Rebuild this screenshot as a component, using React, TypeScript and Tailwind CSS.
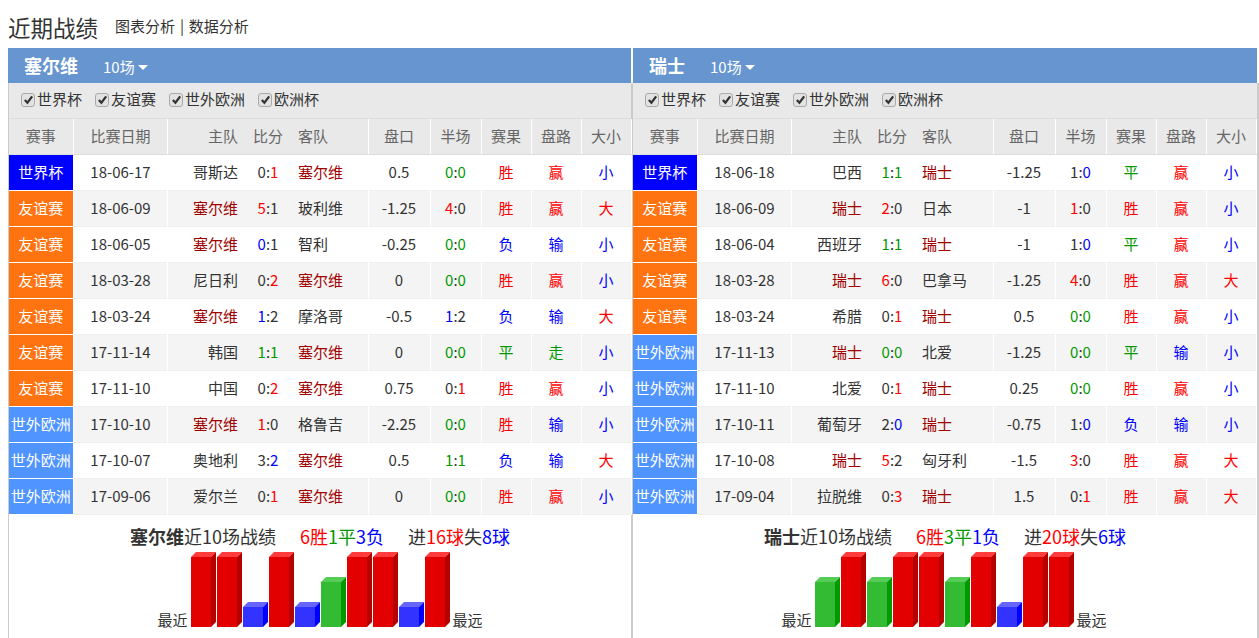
const SANS = "font-['Noto_Sans_CJK_SC','Liberation_Sans',sans-serif]";

type Match = {
  cup: string;
  date: string;
  home: string;
  score: string;
  away: string;
  pan: string;
  half: string;
  res: string;
  road: string;
  size: string;
};

const CUP_BG: Record<string, string> = {
  世界杯: 'bg-[#0000ff]',
  友谊赛: 'bg-[#ff7310]',
  世外欧洲: 'bg-[#4f94ff]',
};

const TONE: Record<string, string> = {
  r: 'text-[#ff0000]',
  b: 'text-[#0000ff]',
  g: 'text-[#009900]',
};

const WORD_TONE: Record<string, string> = {
  胜: 'r', 赢: 'r', 大: 'r',
  负: 'b', 输: 'b', 小: 'b',
  平: 'g', 走: 'g',
};

// score strings are "a:b|xy" where x and y are the tone of each number, - is none
const serbia: Match[] = [
  { cup: '世界杯', date: '18-06-17', home: '哥斯达', score: '0:1|-r', away: '塞尔维', pan: '0.5', half: '0:0|gg', res: '胜', road: '赢', size: '小' },
  { cup: '友谊赛', date: '18-06-09', home: '塞尔维', score: '5:1|r-', away: '玻利维', pan: '-1.25', half: '4:0|r-', res: '胜', road: '赢', size: '大' },
  { cup: '友谊赛', date: '18-06-05', home: '塞尔维', score: '0:1|b-', away: '智利', pan: '-0.25', half: '0:0|gg', res: '负', road: '输', size: '小' },
  { cup: '友谊赛', date: '18-03-28', home: '尼日利', score: '0:2|-r', away: '塞尔维', pan: '0', half: '0:0|gg', res: '胜', road: '赢', size: '小' },
  { cup: '友谊赛', date: '18-03-24', home: '塞尔维', score: '1:2|b-', away: '摩洛哥', pan: '-0.5', half: '1:2|b-', res: '负', road: '输', size: '大' },
  { cup: '友谊赛', date: '17-11-14', home: '韩国', score: '1:1|gg', away: '塞尔维', pan: '0', half: '0:0|gg', res: '平', road: '走', size: '小' },
  { cup: '友谊赛', date: '17-11-10', home: '中国', score: '0:2|-r', away: '塞尔维', pan: '0.75', half: '0:1|-r', res: '胜', road: '赢', size: '小' },
  { cup: '世外欧洲', date: '17-10-10', home: '塞尔维', score: '1:0|r-', away: '格鲁吉', pan: '-2.25', half: '0:0|gg', res: '胜', road: '输', size: '小' },
  { cup: '世外欧洲', date: '17-10-07', home: '奥地利', score: '3:2|-b', away: '塞尔维', pan: '0.5', half: '1:1|gg', res: '负', road: '输', size: '大' },
  { cup: '世外欧洲', date: '17-09-06', home: '爱尔兰', score: '0:1|-r', away: '塞尔维', pan: '0', half: '0:0|gg', res: '胜', road: '赢', size: '小' },
];

const swiss: Match[] = [
  { cup: '世界杯', date: '18-06-18', home: '巴西', score: '1:1|gg', away: '瑞士', pan: '-1.25', half: '1:0|-b', res: '平', road: '赢', size: '小' },
  { cup: '友谊赛', date: '18-06-09', home: '瑞士', score: '2:0|r-', away: '日本', pan: '-1', half: '1:0|r-', res: '胜', road: '赢', size: '小' },
  { cup: '友谊赛', date: '18-06-04', home: '西班牙', score: '1:1|gg', away: '瑞士', pan: '-1', half: '1:0|-b', res: '平', road: '赢', size: '小' },
  { cup: '友谊赛', date: '18-03-28', home: '瑞士', score: '6:0|r-', away: '巴拿马', pan: '-1.25', half: '4:0|r-', res: '胜', road: '赢', size: '大' },
  { cup: '友谊赛', date: '18-03-24', home: '希腊', score: '0:1|-r', away: '瑞士', pan: '0.5', half: '0:0|gg', res: '胜', road: '赢', size: '小' },
  { cup: '世外欧洲', date: '17-11-13', home: '瑞士', score: '0:0|gg', away: '北爱', pan: '-1.25', half: '0:0|gg', res: '平', road: '输', size: '小' },
  { cup: '世外欧洲', date: '17-11-10', home: '北爱', score: '0:1|-r', away: '瑞士', pan: '0.25', half: '0:0|gg', res: '胜', road: '赢', size: '小' },
  { cup: '世外欧洲', date: '17-10-11', home: '葡萄牙', score: '2:0|-b', away: '瑞士', pan: '-0.75', half: '1:0|-b', res: '负', road: '输', size: '小' },
  { cup: '世外欧洲', date: '17-10-08', home: '瑞士', score: '5:2|r-', away: '匈牙利', pan: '-1.5', half: '3:0|r-', res: '胜', road: '赢', size: '大' },
  { cup: '世外欧洲', date: '17-09-04', home: '拉脱维', score: '0:3|-r', away: '瑞士', pan: '1.5', half: '0:1|-r', res: '胜', road: '赢', size: '大' },
];

function Score({ value }: { value: string }) {
  const [nums, tones] = value.split('|');
  const [a, b] = nums.split(':');
  return (
    <>
      <span className={TONE[tones[0]]}>{a}</span>:<span className={TONE[tones[1]]}>{b}</span>
    </>
  );
}

function FilterBox({ label }: { label: string }) {
  return (
    <label className="flex items-center gap-[2px]">
      <span className="flex h-[14px] w-[14px] items-center justify-center rounded-[3px] border border-[#aaaaaa] bg-[#e2e2e2]">
        <svg viewBox="0 0 12 12" className="h-[11px] w-[11px]">
          <polyline points="2,6.5 4.8,9.5 10,2.5" fill="none" stroke="#333333" strokeWidth="2.4" />
        </svg>
      </span>
      <span>{label}</span>
    </label>
  );
}

const BAR_COLORS = {
  r: { front: '#e30000', top: '#ff3b3b', side: '#b50000' },
  g: { front: '#33bb33', top: '#55cc55', side: '#009900' },
  b: { front: '#3333ff', top: '#6666ff', side: '#0000ff' },
};

const BAR_HEIGHT = { r: 75, g: 50, b: 25 };

function Bar({ kind }: { kind: 'r' | 'g' | 'b' }) {
  const c = BAR_COLORS[kind];
  const h = BAR_HEIGHT[kind];
  return (
    <svg width="25" height={h} className="block">
      <rect x="0" y="5" width="20" height={h - 5} fill={c.front} />
      <polygon points="0,5 5,0 25,0 20,5" fill={c.top} />
      <polygon points={`20,5 25,0 25,${h - 5} 20,${h}`} fill={c.side} />
    </svg>
  );
}

function Panel({
  team,
  rows,
  right,
  bars,
  record,
  goals,
}: {
  team: string;
  rows: Match[];
  right?: boolean;
  bars: ('r' | 'g' | 'b')[];
  record: [string, string, string];
  goals: [string, string];
}) {
  const head = 'h-[35px] border-b border-[#dddddd] bg-[#e9e9e9] text-center font-normal text-[#666666]';
  return (
    <section className={right ? 'w-[626px]' : 'w-[625px]'}>
      <div
        className={`flex h-[35px] items-center gap-[25px] bg-[#6695cf] pl-4 text-white ${
          right ? 'w-[624px]' : 'w-[623px]'
        }`}
      >
        <b className="text-[18px]">{team}</b>
        <span className="flex items-center gap-[3px] pt-[3px]">
          10场
          <i className="h-0 w-0 border-x-[5px] border-t-[5px] border-x-transparent border-t-white" />
        </span>
      </div>
      <div className={right ? 'border-r-2 border-[#cccccc]' : 'border-l border-r-2 border-[#cccccc]'}>
        <div className="flex h-[36px] items-center gap-[13px] border-b border-[#dddddd] bg-[#e9e9e9] pb-[2px] pl-3">
          <FilterBox label="世界杯" />
          <FilterBox label="友谊赛" />
          <FilterBox label="世外欧洲" />
          <FilterBox label="欧洲杯" />
        </div>
        <table className={`table-fixed border-collapse ${right ? 'w-[623px]' : 'w-[622px]'}`}>
          <colgroup>
            <col className="w-[64px]" />
            <col className="w-[94px]" />
            <col className="w-[80px]" />
            <col className="w-[42px]" />
            <col className={right ? 'w-[80px]' : 'w-[79px]'} />
            <col className="w-[62px]" />
            <col className="w-[51px]" />
            <col className="w-[50px]" />
            <col className="w-[50px]" />
            <col className="w-[50px]" />
          </colgroup>
          <thead>
            <tr>
              <th className={`${head} border-r border-r-white`}>赛事</th>
              <th className={`${head} border-r border-r-white pl-px`}>比赛日期</th>
              <th className={`${head} pr-[9px] !text-right`}>主队</th>
              <th className={head}>比分</th>
              <th className={`${head} border-r border-r-white pl-[9px] !text-left`}>客队</th>
              <th className={`${head} border-r border-r-white`}>盘口</th>
              <th className={`${head} border-r border-r-white`}>半场</th>
              <th className={`${head} border-r border-r-white`}>赛果</th>
              <th className={`${head} border-r border-r-white`}>盘路</th>
              <th className={`${head} border-r border-r-white`}>大小</th>
            </tr>
          </thead>
          <tbody>
            {rows.map((m, i) => (
              <tr key={m.date + m.home} className={`h-[36px] border-b border-[#eeeeee] text-center ${i % 2 ? 'bg-[#f4f4f4]' : 'bg-white'}`}>
                <td className={`border-r border-b border-white whitespace-nowrap text-white ${CUP_BG[m.cup]}`}>{m.cup}</td>
                <td className="border-r border-white pl-px">{m.date}</td>
                <td className={`pr-[9px] text-right ${m.home === team ? 'text-[#a00000]' : ''}`}>{m.home}</td>
                <td><Score value={m.score} /></td>
                <td className={`border-r border-white pl-[9px] text-left ${m.away === team ? 'text-[#a00000]' : ''}`}>{m.away}</td>
                <td className="border-r border-white">{m.pan}</td>
                <td className="border-r border-white"><Score value={m.half} /></td>
                <td className={`border-r border-white ${TONE[WORD_TONE[m.res]]}`}>{m.res}</td>
                <td className={`border-r border-white ${TONE[WORD_TONE[m.road]]}`}>{m.road}</td>
                <td className={`border-r border-white ${TONE[WORD_TONE[m.size]]}`}>{m.size}</td>
              </tr>
            ))}
          </tbody>
        </table>
        <div className="flex h-[124px] flex-col items-center">
          <div className="flex h-[37px] items-center gap-[24px] whitespace-nowrap pt-[6px] text-[18px]">
            <span>
              <b>{team}</b>近10场战绩
            </span>
            <span>
              <span className={TONE.r}>{record[0]}胜</span>
              <span className={TONE.g}>{record[1]}平</span>
              <span className={TONE.b}>{record[2]}负</span>
            </span>
            <span>
              进<span className={TONE.r}>{goals[0]}球</span>失<span className={TONE.b}>{goals[1]}球</span>
            </span>
          </div>
          <div className={`flex h-[75px] items-end gap-[3px] leading-[14px] ${right ? 'mr-[2px]' : ''}`}>
            <span>最近</span>
            <div className="flex items-end gap-px">
              {bars.map((b, i) => (
                <Bar key={i} kind={b} />
              ))}
            </div>
            <span>最远</span>
          </div>
        </div>
      </div>
    </section>
  );
}

export default function App() {
  return (
    <div className={`${SANS} h-[638px] w-[1259px] overflow-hidden bg-white pl-2 text-[15px] text-[#333333]`}>
      <header className="flex h-[48px] items-center gap-[17px] pt-[8px]">
        <h1 className="text-[22.5px] font-normal">近期战绩</h1>
        <nav className="pb-[3px]">
          <a>图表分析</a>
          <span className="mx-[1.5px]"> | </span>
          <a>数据分析</a>
        </nav>
      </header>
      <main className="flex">
        <Panel
          team="塞尔维"
          rows={serbia}
          bars={['r', 'r', 'b', 'r', 'b', 'g', 'r', 'r', 'b', 'r']}
          record={['6', '1', '3']}
          goals={['16', '8']}
        />
        <Panel
          right
          team="瑞士"
          rows={swiss}
          bars={['g', 'r', 'g', 'r', 'r', 'g', 'r', 'b', 'r', 'r']}
          record={['6', '3', '1']}
          goals={['20', '6']}
        />
      </main>
    </div>
  );
}
